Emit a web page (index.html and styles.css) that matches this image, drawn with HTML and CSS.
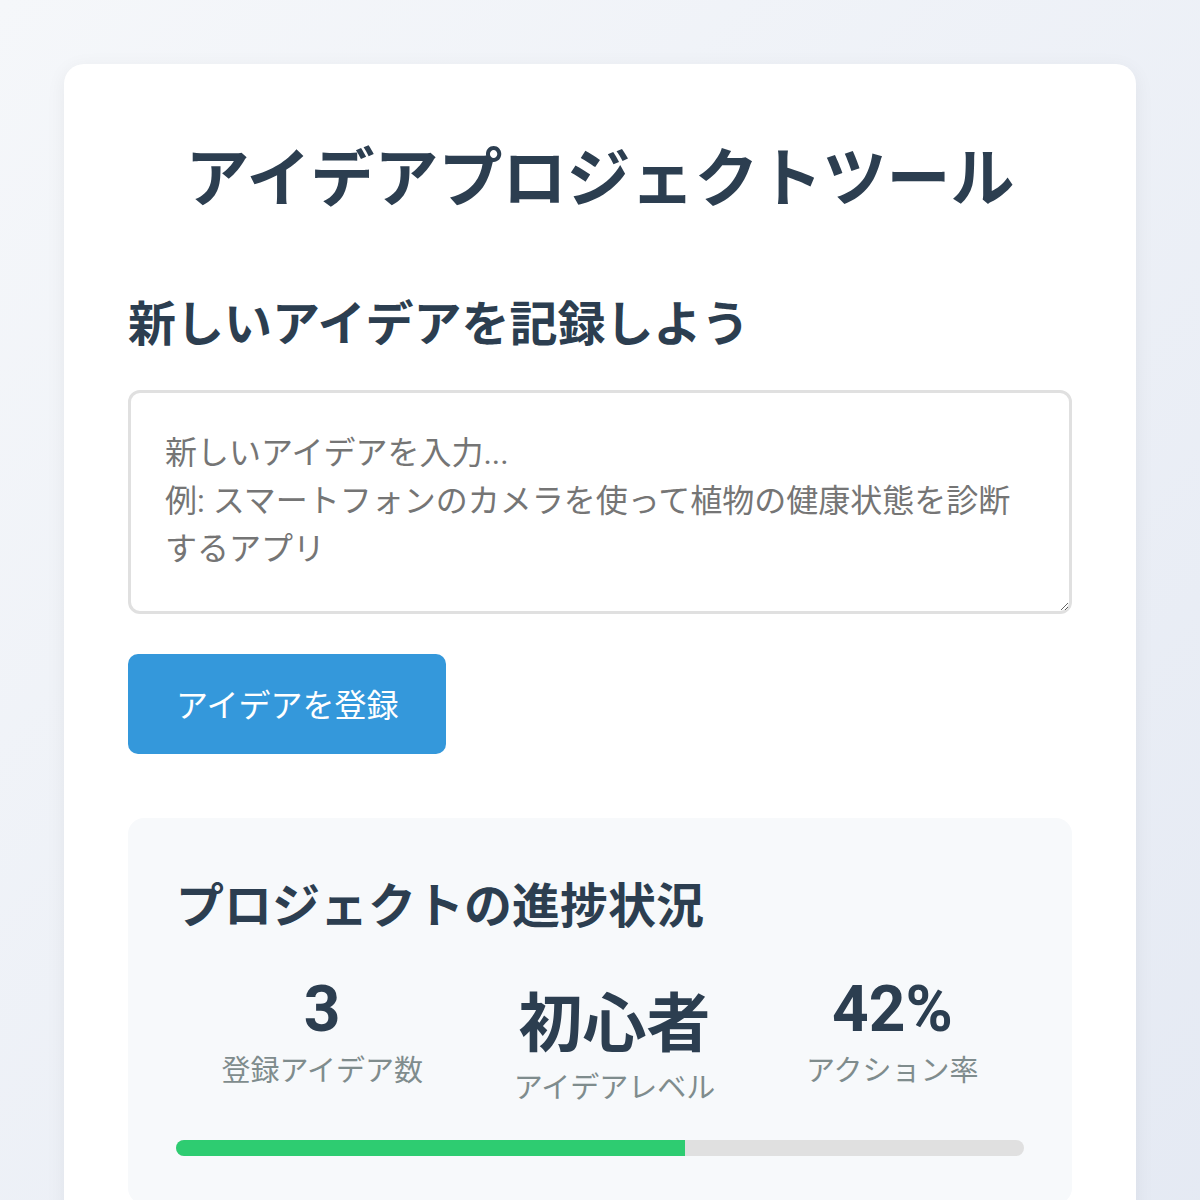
FILE: index.html
```html
<!DOCTYPE html>
<html lang="ja">
<head>
    <meta charset="UTF-8">
    <meta name="viewport" content="width=device-width, initial-scale=1.0">
    <title>アイデアプロジェクトツール</title>
    <link rel="stylesheet" href="styles.css">
</head>
<body>
    <div class="container">
        <h1>アイデアプロジェクトツール</h1>

        <section class="input-section">
            <h2>新しいアイデアを記録しよう</h2>
            <textarea id="idea-input" placeholder="新しいアイデアを入力...&#10;例: スマートフォンのカメラを使って植物の健康状態を診断するアプリ"></textarea>
            <button class="submit-btn" id="submit-btn">アイデアを登録</button>
        </section>

        <section class="progress-section">
            <h3>プロジェクトの進捗状況</h3>
            <div class="stats">
                <div class="stat">
                    <div class="stat-value" id="idea-count">3</div>
                    <div class="stat-label">登録アイデア数</div>
                </div>
                <div class="stat">
                    <div class="stat-value" id="idea-level">初心者</div>
                    <div class="stat-label">アイデアレベル</div>
                </div>
                <div class="stat">
                    <div class="stat-value" id="action-rate">42%</div>
                    <div class="stat-label">アクション率</div>
                </div>
            </div>
            <div class="progress-bar">
                <div class="progress-fill" style="width: 60%;"></div>
            </div>
        </section>
    </div>
</body>
</html>
```

FILE: styles.css
```css
html {
    min-height: 100%;
    background: linear-gradient(135deg, #f5f7fa 0%, #e4e9f3 100%);
}

body {
    font-family: Roboto, "Noto Sans CJK JP", sans-serif;
    margin: 0;
    padding: 64px;
    color: #2c3e50;
}

.container {
    background-color: #fff;
    border-radius: 20px;
    padding: 63px 64px 64px;
    box-shadow: 0 4px 20px rgba(0, 0, 0, 0.06);
}

h1 {
    font-size: 64px;
    font-weight: bold;
    text-align: center;
    margin: 0 0 66px;
}

h2 {
    font-size: 48px;
    font-weight: bold;
    margin: 0 0 35px;
}

textarea {
    display: block;
    width: 100%;
    height: 224px;
    box-sizing: border-box;
    padding: 36px 34px 32px;
    border: 3px solid #e0e0e0;
    border-radius: 12px;
    font-family: inherit;
    font-size: 32px;
    line-height: 48px;
    color: #333;
    resize: vertical;
}

textarea::placeholder {
    color: #757575;
}

.submit-btn {
    margin-top: 40px;
    background-color: #3498db;
    color: white;
    border: none;
    border-radius: 10px;
    padding: 28px 48px 24px;
    font-family: inherit;
    font-size: 32px;
    line-height: 48px;
    cursor: pointer;
}

.progress-section {
    margin-top: 64px;
    background-color: #f7f9fb;
    border-radius: 16px;
    padding: 49px 48px 48px;
}

h3 {
    font-size: 48px;
    font-weight: bold;
    margin: 0 0 35px;
}

.stats {
    display: flex;
    justify-content: space-around;
    align-items: flex-start;
}

.stat {
    text-align: center;
}

.stat-value {
    font-size: 64px;
    font-weight: bold;
}

.stat-label {
    font-size: 29px;
    color: #7f8c8d;
}

.progress-bar {
    margin-top: 34px;
    height: 16px;
    background-color: #e0e0e0;
    border-radius: 8px;
    overflow: hidden;
}

.progress-fill {
    height: 100%;
    background-color: #2ecc71;
}
```
